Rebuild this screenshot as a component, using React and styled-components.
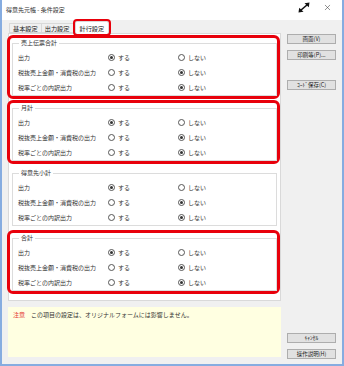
import styled, { createGlobalStyle } from 'styled-components'
import { X } from 'lucide-react'

const GlobalStyle = createGlobalStyle`
  html, body {
    margin: 0;
    padding: 0;
    background: #f0f0f0;
  }
  * {
    box-sizing: border-box;
  }
`

const font = `"Noto Sans CJK JP", "Noto Sans", sans-serif`

const groups = [
  { title: '売上伝票合計', highlight: true },
  { title: '月計', highlight: true },
  { title: '得意先小計', highlight: false },
  { title: '合計', highlight: true },
]

const rows = [
  { label: '出力', value: 'on' },
  { label: '税抜売上金額・消費税の出力', value: 'off' },
  { label: '税率ごとの内訳出力', value: 'off' },
]

function ExpandIcon() {
  return (
    <svg width="12" height="11" viewBox="0 0 12 11" style={{ flex: 'none' }}>
      <path d="M2.5 8.5 L9.5 2.5" stroke="#111" strokeWidth="1.6" />
      <path d="M11.5 0.5 L6.5 1.2 L10.8 5.3 Z" fill="#111" />
      <path d="M0.5 10.5 L5.5 9.8 L1.2 5.7 Z" fill="#111" />
    </svg>
  )
}

function Radio({ checked, children }) {
  return (
    <Choice>
      <Circle $checked={checked} />
      {children}
    </Choice>
  )
}

export default function App() {
  return (
    <>
      <GlobalStyle />
      <Window>
        <TitleBar>
          <Title>得意先元帳 - 条件設定</Title>
          <TitleIcons>
            <ExpandIcon />
            <X size={9} strokeWidth={1.4} color="#333" />
          </TitleIcons>
        </TitleBar>
        <Body>
          <LeftCol>
            <Tabs>
              <Tab>基本設定</Tab>
              <Tab>出力設定</Tab>
              <Tab $active>計行設定</Tab>
            </Tabs>
            <Panel>
              {groups.map((g) => (
                <Frame key={g.title} $highlight={g.highlight}>
                  <Group>
                    <Legend>{g.title}</Legend>
                    {rows.map((r) => (
                      <Row key={r.label}>
                        <Label>{r.label}</Label>
                        <Radio checked={r.value === 'on'}>する</Radio>
                        <Radio checked={r.value === 'off'}>しない</Radio>
                      </Row>
                    ))}
                  </Group>
                </Frame>
              ))}
            </Panel>
            <Notice>
              <Warn>注意</Warn>
              この項目の設定は、オリジナルフォームには影響しません。
            </Notice>
          </LeftCol>
          <RightCol>
            <Button>画面(V)</Button>
            <Button>印刷等(P)...</Button>
            <Button $gap>ｺｰﾄﾞ保存(C)</Button>
            <Spacer />
            <Button>ｷｬﾝｾﾙ</Button>
            <Button>操作説明(H)</Button>
          </RightCol>
        </Body>
      </Window>
    </>
  )
}

const Window = styled.div`
  width: 344px;
  height: 366px;
  display: flex;
  flex-direction: column;
  background: #f0f0f0;
  border: 2px solid #86ace0;
  border-top: none;
  font-family: ${font};
  color: #222;
  overflow: hidden;
`

const TitleBar = styled.div`
  height: 20px;
  flex: none;
  display: flex;
  align-items: center;
  padding: 0 4px 2px 4px;
  background: #fff;
`

const Title = styled.div`
  flex: 1;
  font-size: 6px;
  color: #333;
`

const TitleIcons = styled.div`
  flex: none;
  width: 34px;
  margin-right: 6px;
  display: flex;
  align-items: center;
  justify-content: space-between;
  margin-top: -4px;
`

const Body = styled.div`
  flex: 1;
  display: flex;
  gap: 6px;
  padding: 2px 6px 5px 6px;
`

const LeftCol = styled.div`
  width: 273px;
  display: flex;
  flex-direction: column;
`

const Tabs = styled.div`
  height: 11px;
  display: flex;
  align-items: flex-end;
  padding-left: 1px;
  position: relative;
  z-index: 1;
`

const Tab = styled.div`
  height: ${(p) => (p.$active ? '13px' : '10px')};
  margin-bottom: ${(p) => (p.$active ? '-1px' : '0')};
  padding: 0 ${(p) => (p.$active ? '4px' : '3px')};
  margin-right: -1px;
  display: flex;
  align-items: center;
  font-size: 6.2px;
  color: #222;
  background: ${(p) => (p.$active ? '#fff' : '#f0f0f0')};
  border: 1px solid #d9d9d9;
  border-bottom: ${(p) => (p.$active ? 'none' : '1px solid #d9d9d9')};
  ${(p) =>
    p.$active &&
    `
    margin-left: 2px;
    outline: 2.5px solid #e8000b;
    outline-offset: 0.5px;
    border-radius: 2px;
  `}
`

const Panel = styled.div`
  height: 268px;
  background: #fff;
  border: 1px solid #d9d9d9;
  padding-top: 1px;
  display: flex;
  flex-direction: column;
  gap: 1px;
`

const Frame = styled.div`
  height: 64px;
  margin-left: -2px;
  width: calc(100% + 2px);
  border: 3px solid ${(p) => (p.$highlight ? '#e8000b' : 'transparent')};
  border-radius: 6px;
  padding: 0 0 0 2px;
`

const Group = styled.fieldset`
  margin: 1px 0 0 0;
  padding: 3px 0 0 5px;
  border: 1px solid #dcdcdc;
  min-width: 0;
`

const Legend = styled.legend`
  font-size: 6px;
  line-height: 8px;
  padding: 0 2px;
  margin-left: 1px;
  color: #333;
`

const Row = styled.div`
  height: 15px;
  display: grid;
  grid-template-columns: 90px 70px auto;
  align-items: center;
`

const Label = styled.span`
  font-size: 6px;
  color: #333;
`

const Choice = styled.span`
  display: flex;
  align-items: center;
  gap: 3px;
  font-size: 6px;
  color: #333;
`

const Circle = styled.span`
  width: 7px;
  height: 7px;
  border-radius: 50%;
  border: 1px solid #555;
  background: #fff;
  display: flex;
  align-items: center;
  justify-content: center;

  &::after {
    content: '';
    width: 3px;
    height: 3px;
    border-radius: 50%;
    background: ${(p) => (p.$checked ? '#333' : 'transparent')};
  }
`

const Notice = styled.div`
  margin-top: 6px;
  height: 50px;
  background: #ffffe1;
  padding: 4px 5px;
  font-size: 6px;
  line-height: 8px;
  color: #333;
`

const Warn = styled.span`
  color: #e53935;
  margin-right: 6px;
`

const RightCol = styled.div`
  width: 49px;
  display: flex;
  flex-direction: column;
  gap: 6px;
  padding-top: 12px;
`

const Button = styled.div`
  height: 10px;
  margin-top: ${(p) => (p.$gap ? '14px' : '0')};
  background: #e1e1e1;
  border: 1px solid #adadad;
  display: flex;
  align-items: center;
  justify-content: center;
  font-size: 5.5px;
  color: #222;
  white-space: nowrap;
`

const Spacer = styled.div`
  flex: 1;
`
